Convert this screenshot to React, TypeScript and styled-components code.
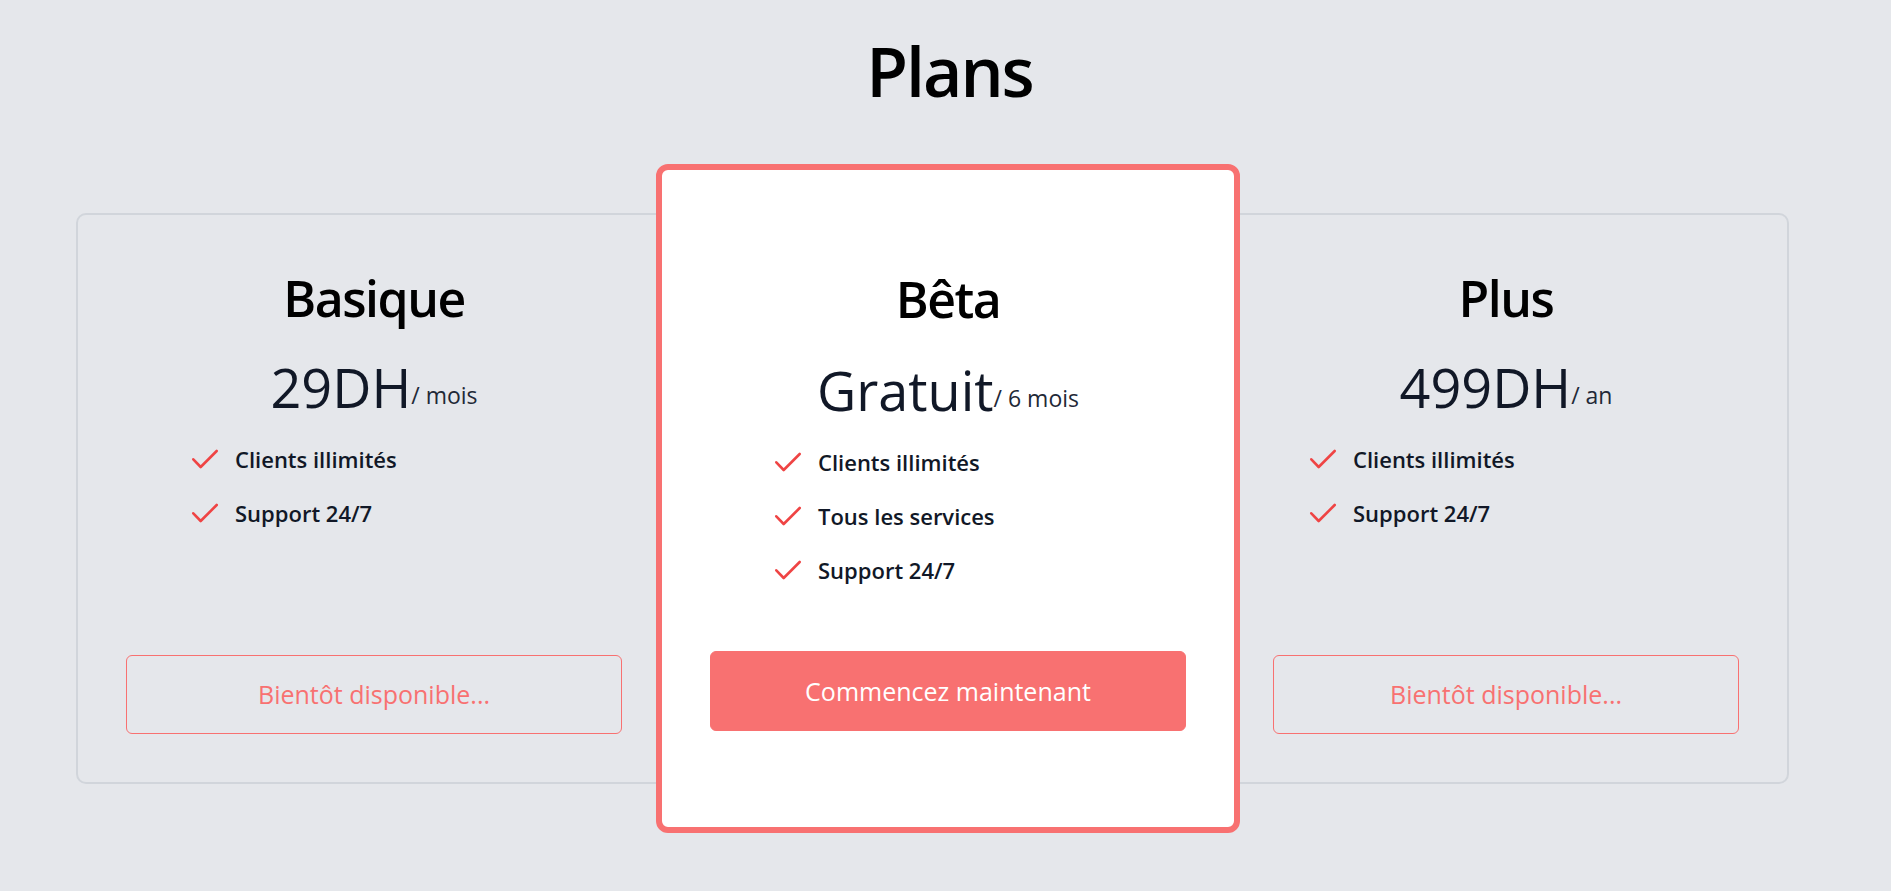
import { FC } from 'react';
import styled, { createGlobalStyle } from 'styled-components';

type Plan = {
  id: string;
  name: string;
  price: string;
  period: string;
  features: string[];
  cta: string;
  featured?: boolean;
  width: number;
  indent: number;
};

const plans: Plan[] = [
  {
    id: 'basic',
    name: 'Basique',
    price: '29DH',
    period: '/ mois',
    features: ['Clients illimités', 'Support 24/7'],
    cta: 'Bientôt disponible...',
    width: 596,
    indent: 65,
  },
  {
    id: 'beta',
    name: 'Bêta',
    price: 'Gratuit',
    period: '/ 6 mois',
    features: ['Clients illimités', 'Tous les services', 'Support 24/7'],
    cta: 'Commencez maintenant',
    featured: true,
    width: 584,
    indent: 64,
  },
  {
    id: 'plus',
    name: 'Plus',
    price: '499DH',
    period: '/ an',
    features: ['Clients illimités', 'Support 24/7'],
    cta: 'Bientôt disponible...',
    width: 566,
    indent: 36,
  },
];

const CheckIcon: FC = () => (
  <StyledCheck viewBox="0 0 28 20" width={28} height={20} aria-hidden="true">
    <polyline points="2.3,10.3 9.7,18 25.7,2" />
  </StyledCheck>
);

export default function App() {
  return (
    <>
      <GlobalStyle />
      <StyledPage>
        <StyledHeading>Plans</StyledHeading>
        <StyledCardsRow>
          {plans.map((plan) => (
            <StyledCard key={plan.id} $featured={!!plan.featured} $width={plan.width}>
              <StyledCardTitle>{plan.name}</StyledCardTitle>
              <StyledPriceRow $featured={!!plan.featured}>
                <StyledPrice>{plan.price}</StyledPrice>
                <StyledPeriod>{plan.period}</StyledPeriod>
              </StyledPriceRow>
              <StyledFeatureList $indent={plan.indent}>
                {plan.features.map((feature) => (
                  <StyledFeature key={feature}>
                    <CheckIcon />
                    {feature}
                  </StyledFeature>
                ))}
              </StyledFeatureList>
              <StyledButton $featured={!!plan.featured}>{plan.cta}</StyledButton>
            </StyledCard>
          ))}
        </StyledCardsRow>
      </StyledPage>
    </>
  );
}

const GlobalStyle = createGlobalStyle`
  * {
    box-sizing: border-box;
  }
  body {
    margin: 0;
    background: #e5e7eb;
    font-family: 'Open Sans', 'Noto Sans', sans-serif;
    color: #111827;
  }
`;

const StyledPage = styled.main`
  min-height: 100vh;
  padding-top: 29px;
`;

const StyledHeading = styled.h1`
  margin: 0;
  text-align: center;
  font-size: 68px;
  line-height: 84px;
  letter-spacing: -0.03em;
  font-weight: 600;
  color: #000;
  padding-left: 8px;
`;

const StyledCardsRow = styled.section`
  display: flex;
  align-items: center;
  margin-top: 51px;
  padding-left: 76px;
`;

const StyledCard = styled.article<{ $featured: boolean; $width: number }>`
  display: flex;
  flex-direction: column;
  flex: 0 0 ${(p) => p.$width}px;
  border-radius: ${(p) => (p.$featured ? '12px' : '10px')};
  border: ${(p) => (p.$featured ? '6px solid #f87171' : '2px solid #d1d5db')};
  background: ${(p) => (p.$featured ? '#ffffff' : 'transparent')};
  padding: ${(p) => (p.$featured ? '95px 48px 96px' : '49px 48px 48px')};
  height: ${(p) => (p.$featured ? 'auto' : '571px')};
  margin: ${(p) => (p.$featured ? '0 -17px 0 -16px' : '0')};
  position: relative;
  z-index: ${(p) => (p.$featured ? 1 : 0)};
`;

const StyledCardTitle = styled.h2`
  margin: 0;
  text-align: center;
  font-size: 50px;
  line-height: 68px;
  letter-spacing: -0.03em;
  font-weight: 600;
  color: #000;
`;

const StyledPriceRow = styled.div<{ $featured: boolean }>`
  margin-top: ${(p) => (p.$featured ? '25px' : '23px')};
  text-align: center;
  line-height: 1.2;
  white-space: nowrap;
`;

const StyledPrice = styled.span`
  font-size: 54px;
  font-weight: 500;
  color: #111827;
`;

const StyledPeriod = styled.span`
  font-size: 23px;
  color: #1f2937;
  vertical-align: 4px;
`;

const StyledFeatureList = styled.ul<{ $indent: number }>`
  list-style: none;
  margin: 24px 0 0;
  padding: 0 0 0 ${(p) => p.$indent}px;
  display: flex;
  flex-direction: column;
  gap: 24px;
`;

const StyledFeature = styled.li`
  display: flex;
  align-items: center;
  gap: 16px;
  height: 30px;
  font-size: 22px;
  font-weight: 600;
  color: #111827;
`;

const StyledCheck = styled.svg`
  flex: 0 0 auto;
  fill: none;
  stroke: #ef4444;
  stroke-width: 2.6;
  stroke-linecap: round;
  stroke-linejoin: round;
`;

const StyledButton = styled.button<{ $featured: boolean }>`
  margin-top: ${(p) => (p.$featured ? '66px' : 'auto')};
  height: ${(p) => (p.$featured ? '80px' : '79px')};
  width: 100%;
  border-radius: 6px;
  border: 1px solid #f87171;
  background: ${(p) => (p.$featured ? '#f87171' : 'transparent')};
  color: ${(p) => (p.$featured ? '#ffffff' : '#f87171')};
  font-family: inherit;
  font-size: 25px;
  cursor: pointer;
`;
